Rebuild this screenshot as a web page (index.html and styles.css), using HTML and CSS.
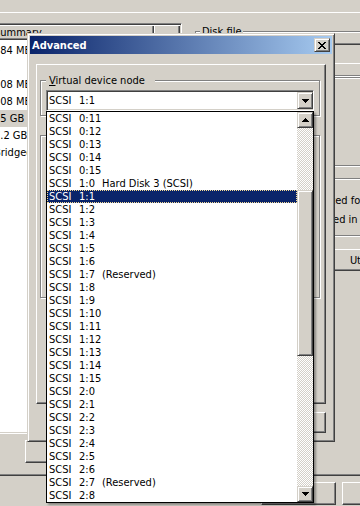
FILE: index.html
```html
<!DOCTYPE html>
<html lang="en">
<head>
    <meta charset="UTF-8">
    <meta name="viewport" content="width=device-width, initial-scale=1.0">
    <title>Virtual Machine Settings - Advanced</title>
    <link rel="stylesheet" href="styles.css">
</head>
<body>

    <div id="desktop">
        <div class="tab-row"></div>

        <div class="tab-page">
            <div class="hardware">
                <div class="listview field">
                    <div class="lv-header">
                        <div class="lv-col col-device">Device</div>
                        <div class="lv-col col-summary">Summary</div>
                        <div class="lv-col col-rest"></div>
                    </div>
                    <div class="lv-body">
                        <div class="lv-row"><span class="cell-device">Memory</span><span>384 MB</span></div>
                        <div class="lv-row"><span class="cell-device">CPU</span><span>1</span></div>
                        <div class="lv-row"><span class="cell-device">Disk 1</span><span>508 MB</span></div>
                        <div class="lv-row"><span class="cell-device">Disk 2</span><span>508 MB</span></div>
                        <div class="lv-row lv-selected"><span class="cell-device">Disk 3</span><span>25 GB (F</span></div>
                        <div class="lv-row"><span class="cell-device">Disk 4</span><span>7.2 GB</span></div>
                        <div class="lv-row"><span class="cell-device">Ethernet</span><span>Bridged</span></div>
                    </div>
                </div>
                <div class="hw-buttons">
                    <button class="btn"></button>
                    <button class="btn"></button>
                </div>
            </div>

            <div class="disk-settings">
                <div class="group disk-file">
                    <div class="group-label">Disk file</div>
                    <div class="field textbox"></div>
                </div>
                <div class="group capacity"></div>
                <div class="group disk-info">
                    <p class="info-line">Disk space is not preallocated for this hard disk.</p>
                    <p class="info-line">Hard disk contents are stored in a single file.</p>
                </div>
                <div class="utilities">
                    <button class="btn">Utilities</button>
                </div>
            </div>
        </div>

        <div class="main-buttons">
            <button class="btn">OK</button>
            <button class="btn">Cancel</button>
            <button class="btn">Help</button>
        </div>

        <div id="advanced" class="window">
            <div class="caption">
                <span>Advanced</span>
                <button class="bevel close">
                    <svg width="8" height="7" viewBox="0 0 8 7"><path d="M0 0h2v1h-2zM6 0h2v1h-2zM1 1h2v1h-2zM5 1h2v1h-2zM2 2h4v1h-4zM3 3h2v1h-2zM2 4h4v1h-4zM1 5h2v1h-2zM5 5h2v1h-2zM0 6h2v1h-2zM6 6h2v1h-2z"/></svg>
                </button>
            </div>
            <div class="client">
                <div class="panel">
                    <div class="group node">
                        <div class="group-label"><u>V</u>irtual device node</div>
                        <div class="combo field">
                            <span class="combo-value"><span class="bus">SCSI</span><span class="unit">1:1</span></span>
                            <span class="bevel drop-btn">
                                <svg width="7" height="4" viewBox="0 0 7 4"><path d="M0 0H7V1H6V2H5V3H4V4H3V3H2V2H1V1H0Z"/></svg>
                            </span>

                            <div class="droplist">
                                <div class="options">
                                    <div class="option"><span class="bus">SCSI</span><span class="unit">0:11</span></div>
                                    <div class="option"><span class="bus">SCSI</span><span class="unit">0:12</span></div>
                                    <div class="option"><span class="bus">SCSI</span><span class="unit">0:13</span></div>
                                    <div class="option"><span class="bus">SCSI</span><span class="unit">0:14</span></div>
                                    <div class="option"><span class="bus">SCSI</span><span class="unit">0:15</span></div>
                                    <div class="option"><span class="bus">SCSI</span><span class="unit">1:0</span>Hard Disk 3 (SCSI)</div>
                                    <div class="option current"><span class="bus">SCSI</span><span class="unit">1:1</span></div>
                                    <div class="option"><span class="bus">SCSI</span><span class="unit">1:2</span></div>
                                    <div class="option"><span class="bus">SCSI</span><span class="unit">1:3</span></div>
                                    <div class="option"><span class="bus">SCSI</span><span class="unit">1:4</span></div>
                                    <div class="option"><span class="bus">SCSI</span><span class="unit">1:5</span></div>
                                    <div class="option"><span class="bus">SCSI</span><span class="unit">1:6</span></div>
                                    <div class="option"><span class="bus">SCSI</span><span class="unit">1:7</span>(Reserved)</div>
                                    <div class="option"><span class="bus">SCSI</span><span class="unit">1:8</span></div>
                                    <div class="option"><span class="bus">SCSI</span><span class="unit">1:9</span></div>
                                    <div class="option"><span class="bus">SCSI</span><span class="unit">1:10</span></div>
                                    <div class="option"><span class="bus">SCSI</span><span class="unit">1:11</span></div>
                                    <div class="option"><span class="bus">SCSI</span><span class="unit">1:12</span></div>
                                    <div class="option"><span class="bus">SCSI</span><span class="unit">1:13</span></div>
                                    <div class="option"><span class="bus">SCSI</span><span class="unit">1:14</span></div>
                                    <div class="option"><span class="bus">SCSI</span><span class="unit">1:15</span></div>
                                    <div class="option"><span class="bus">SCSI</span><span class="unit">2:0</span></div>
                                    <div class="option"><span class="bus">SCSI</span><span class="unit">2:1</span></div>
                                    <div class="option"><span class="bus">SCSI</span><span class="unit">2:2</span></div>
                                    <div class="option"><span class="bus">SCSI</span><span class="unit">2:3</span></div>
                                    <div class="option"><span class="bus">SCSI</span><span class="unit">2:4</span></div>
                                    <div class="option"><span class="bus">SCSI</span><span class="unit">2:5</span></div>
                                    <div class="option"><span class="bus">SCSI</span><span class="unit">2:6</span></div>
                                    <div class="option"><span class="bus">SCSI</span><span class="unit">2:7</span>(Reserved)</div>
                                    <div class="option"><span class="bus">SCSI</span><span class="unit">2:8</span></div>
                                </div>
                                <div class="scrollbar">
                                    <span class="bevel scroll-btn">
                                        <svg width="7" height="4" viewBox="0 0 7 4"><path d="M3 0H4V1H5V2H6V3H7V4H0V3H1V2H2V1H3Z"/></svg>
                                    </span>
                                    <span class="scroll-track track-top"></span>
                                    <span class="bevel thumb"></span>
                                    <span class="scroll-track track-bottom"></span>
                                    <span class="bevel scroll-btn">
                                        <svg width="7" height="4" viewBox="0 0 7 4"><path d="M0 0H7V1H6V2H5V3H4V4H3V3H2V2H1V1H0Z"/></svg>
                                    </span>
                                </div>
                            </div>
                        </div>
                    </div>
                    <div class="group mode"></div>
                </div>
                <div class="dialog-buttons">
                    <button class="btn"></button>
                    <button class="btn"></button>
                    <button class="btn"></button>
                </div>
            </div>
        </div>
    </div>

</body>
</html>
```

FILE: styles.css
```css
body {
    margin: 0;
    font-family: "DejaVu Sans Condensed", "DejaVu Sans", sans-serif;
    font-stretch: condensed;
    font-size: 11px;
    line-height: 13px;
    color: #000;
    background-color: #d4d0c8;
}

#desktop {
    position: relative;
    width: 360px;
    height: 506px;
    overflow: hidden;
}

button {
    font: inherit;
    color: #000;
    margin: 0;
    padding: 0;
}

p {
    margin: 0;
}

svg {
    display: block;
    shape-rendering: crispEdges;
}

/* classic 3d edges */
.btn {
    box-sizing: border-box;
    flex: none;
    width: 75px;
    height: 23px;
    background-color: #d4d0c8;
    border: 1px solid;
    border-color: #fff #404040 #404040 #fff;
    box-shadow: inset -1px -1px #808080;
}

.bevel {
    box-sizing: border-box;
    display: flex;
    align-items: center;
    justify-content: center;
    flex: none;
    background-color: #d4d0c8;
    border: 1px solid;
    border-color: #d4d0c8 #404040 #404040 #d4d0c8;
    box-shadow: inset 1px 1px #fff, inset -1px -1px #808080;
}

.field {
    box-sizing: border-box;
    border: 1px solid;
    border-color: #808080 #fff #fff #808080;
    box-shadow: inset 1px 1px #404040, inset -1px -1px #d4d0c8;
}

.group {
    box-sizing: border-box;
    border: 1px solid #808080;
    box-shadow: inset 1px 1px #fff, 1px 1px #fff;
}

.group-label {
    width: fit-content;
    height: 13px;
    margin-top: -7px;
    background-color: #d4d0c8;
    white-space: nowrap;
}

/* settings window behind the dialog */
.tab-row {
    height: 12px;
}

.tab-page {
    box-sizing: border-box;
    display: flex;
    gap: 13px;
    height: 464px;
    border-top: 1px solid #fff;
    border-bottom: 1px solid #404040;
    box-shadow: inset 0 -1px #808080;
}

.hardware {
    flex: none;
    margin-left: -90px;
    padding-top: 10px;
}

.listview {
    width: 272px;
    height: 411px;
    padding: 1px;
    background-color: #fff;
    overflow: hidden;
}

.lv-header {
    display: flex;
    height: 15px;
}

.lv-col {
    box-sizing: border-box;
    flex: none;
    height: 15px;
    padding-left: 4px;
    line-height: 15px;
    background-color: #d4d0c8;
    box-shadow: inset 1px 1px #fff, inset -1px -1px #404040, inset -2px -2px #808080;
    white-space: nowrap;
}

.col-device {
    width: 78px;
}

.col-summary {
    width: 164px;
}

.col-rest {
    flex: 1;
}

.lv-body {
    padding-top: 2px;
}

.lv-row {
    display: flex;
    height: 17px;
    line-height: 17px;
    white-space: nowrap;
}

.cell-device {
    box-sizing: border-box;
    flex: none;
    width: 82px;
    padding-left: 20px;
    overflow: hidden;
}

.lv-selected {
    background-color: #d4d0c8;
}

.hw-buttons {
    display: flex;
    justify-content: flex-end;
    gap: 7px;
    margin-top: 6px;
}

.disk-settings {
    flex: none;
    width: 211px;
    padding-top: 18px;
}

.disk-settings .group-label {
    margin-left: 4px;
    padding: 0 2px;
}

.disk-file {
    height: 45px;
}

.textbox {
    height: 21px;
    margin: 5px 6px 0;
}

.capacity {
    height: 89px;
    margin-top: 1px;
}

.disk-info {
    height: 58px;
    margin-top: 12px;
}

.info-line {
    margin-top: 6px;
    padding-left: 3px;
    white-space: nowrap;
}

.info-line:first-child {
    margin-top: 15px;
}

.utilities {
    display: flex;
    justify-content: flex-end;
    margin-top: 13px;
}

.utilities .btn {
    height: 22px;
}

.main-buttons {
    display: flex;
    gap: 6px;
    margin-top: 6px;
    padding-left: 261px;
}

/* advanced dialog */
.window {
    position: absolute;
    left: 27px;
    top: 33px;
    box-sizing: border-box;
    width: 308px;
    height: 409px;
    padding: 2px;
    background-color: #d4d0c8;
    border: 1px solid;
    border-color: #d4d0c8 #404040 #404040 #d4d0c8;
    box-shadow: inset 1px 1px #fff, inset -1px -1px #808080;
}

.caption {
    display: flex;
    align-items: center;
    justify-content: space-between;
    height: 18px;
    padding: 0 2px;
    background: linear-gradient(to right, #0a246a, #a6caf0);
    color: #fff;
    font-weight: bold;
}

.close {
    width: 16px;
    height: 14px;
}

.client {
    margin-top: 1px;
    padding: 9px 6px 0;
}

.panel {
    box-sizing: border-box;
    height: 340px;
    padding: 15px 5px 0 3px;
    border: 1px solid;
    border-color: #fff #404040 #404040 #fff;
    box-shadow: inset -1px -1px #808080;
}

.node {
    height: 36px;
}

.node .group-label {
    margin-left: 5px;
    padding: 0 10px 0 3px;
}

.combo {
    position: relative;
    display: flex;
    align-items: center;
    width: 268px;
    height: 21px;
    margin: 3px 0 0 5px;
    padding: 1px 0 1px 2px;
    background-color: #fff;
}

.combo-value {
    flex: 1;
    white-space: nowrap;
}

.drop-btn {
    width: 16px;
    height: 17px;
}

.bus {
    display: inline-block;
    width: 30px;
}

.unit {
    display: inline-block;
    width: 23px;
}

.mode {
    height: 163px;
    margin-top: 19px;
}

.dialog-buttons {
    display: flex;
    justify-content: flex-end;
    gap: 6px;
    margin-top: 8px;
}

.dialog-buttons .btn {
    height: 21px;
}

/* open list of the combo */
.droplist {
    position: absolute;
    left: -1px;
    top: calc(100% + 1px);
    z-index: 1;
    box-sizing: border-box;
    display: flex;
    width: 268px;
    height: 392px;
    border: 1px solid #000;
    background-color: #fff;
    box-shadow: 2px 2px 2px rgba(0, 0, 0, 0.35);
}

.options {
    flex: none;
    width: 250px;
}

.option {
    height: 13px;
    padding-left: 2px;
    white-space: nowrap;
}

.option.current {
    background-color: #0a246a;
    color: #fff;
    outline: 1px dotted #f5db95;
    outline-offset: -1px;
}

.scrollbar {
    display: flex;
    flex-direction: column;
    width: 16px;
}

.scroll-btn {
    height: 16px;
}

.scroll-track {
    background: repeating-conic-gradient(#fff 0 25%, #d4d0c8 0 50%) 0 0 / 2px 2px;
}

.track-top {
    flex: none;
    height: 62px;
}

.thumb {
    height: 166px;
}

.track-bottom {
    flex: 1;
}
```
